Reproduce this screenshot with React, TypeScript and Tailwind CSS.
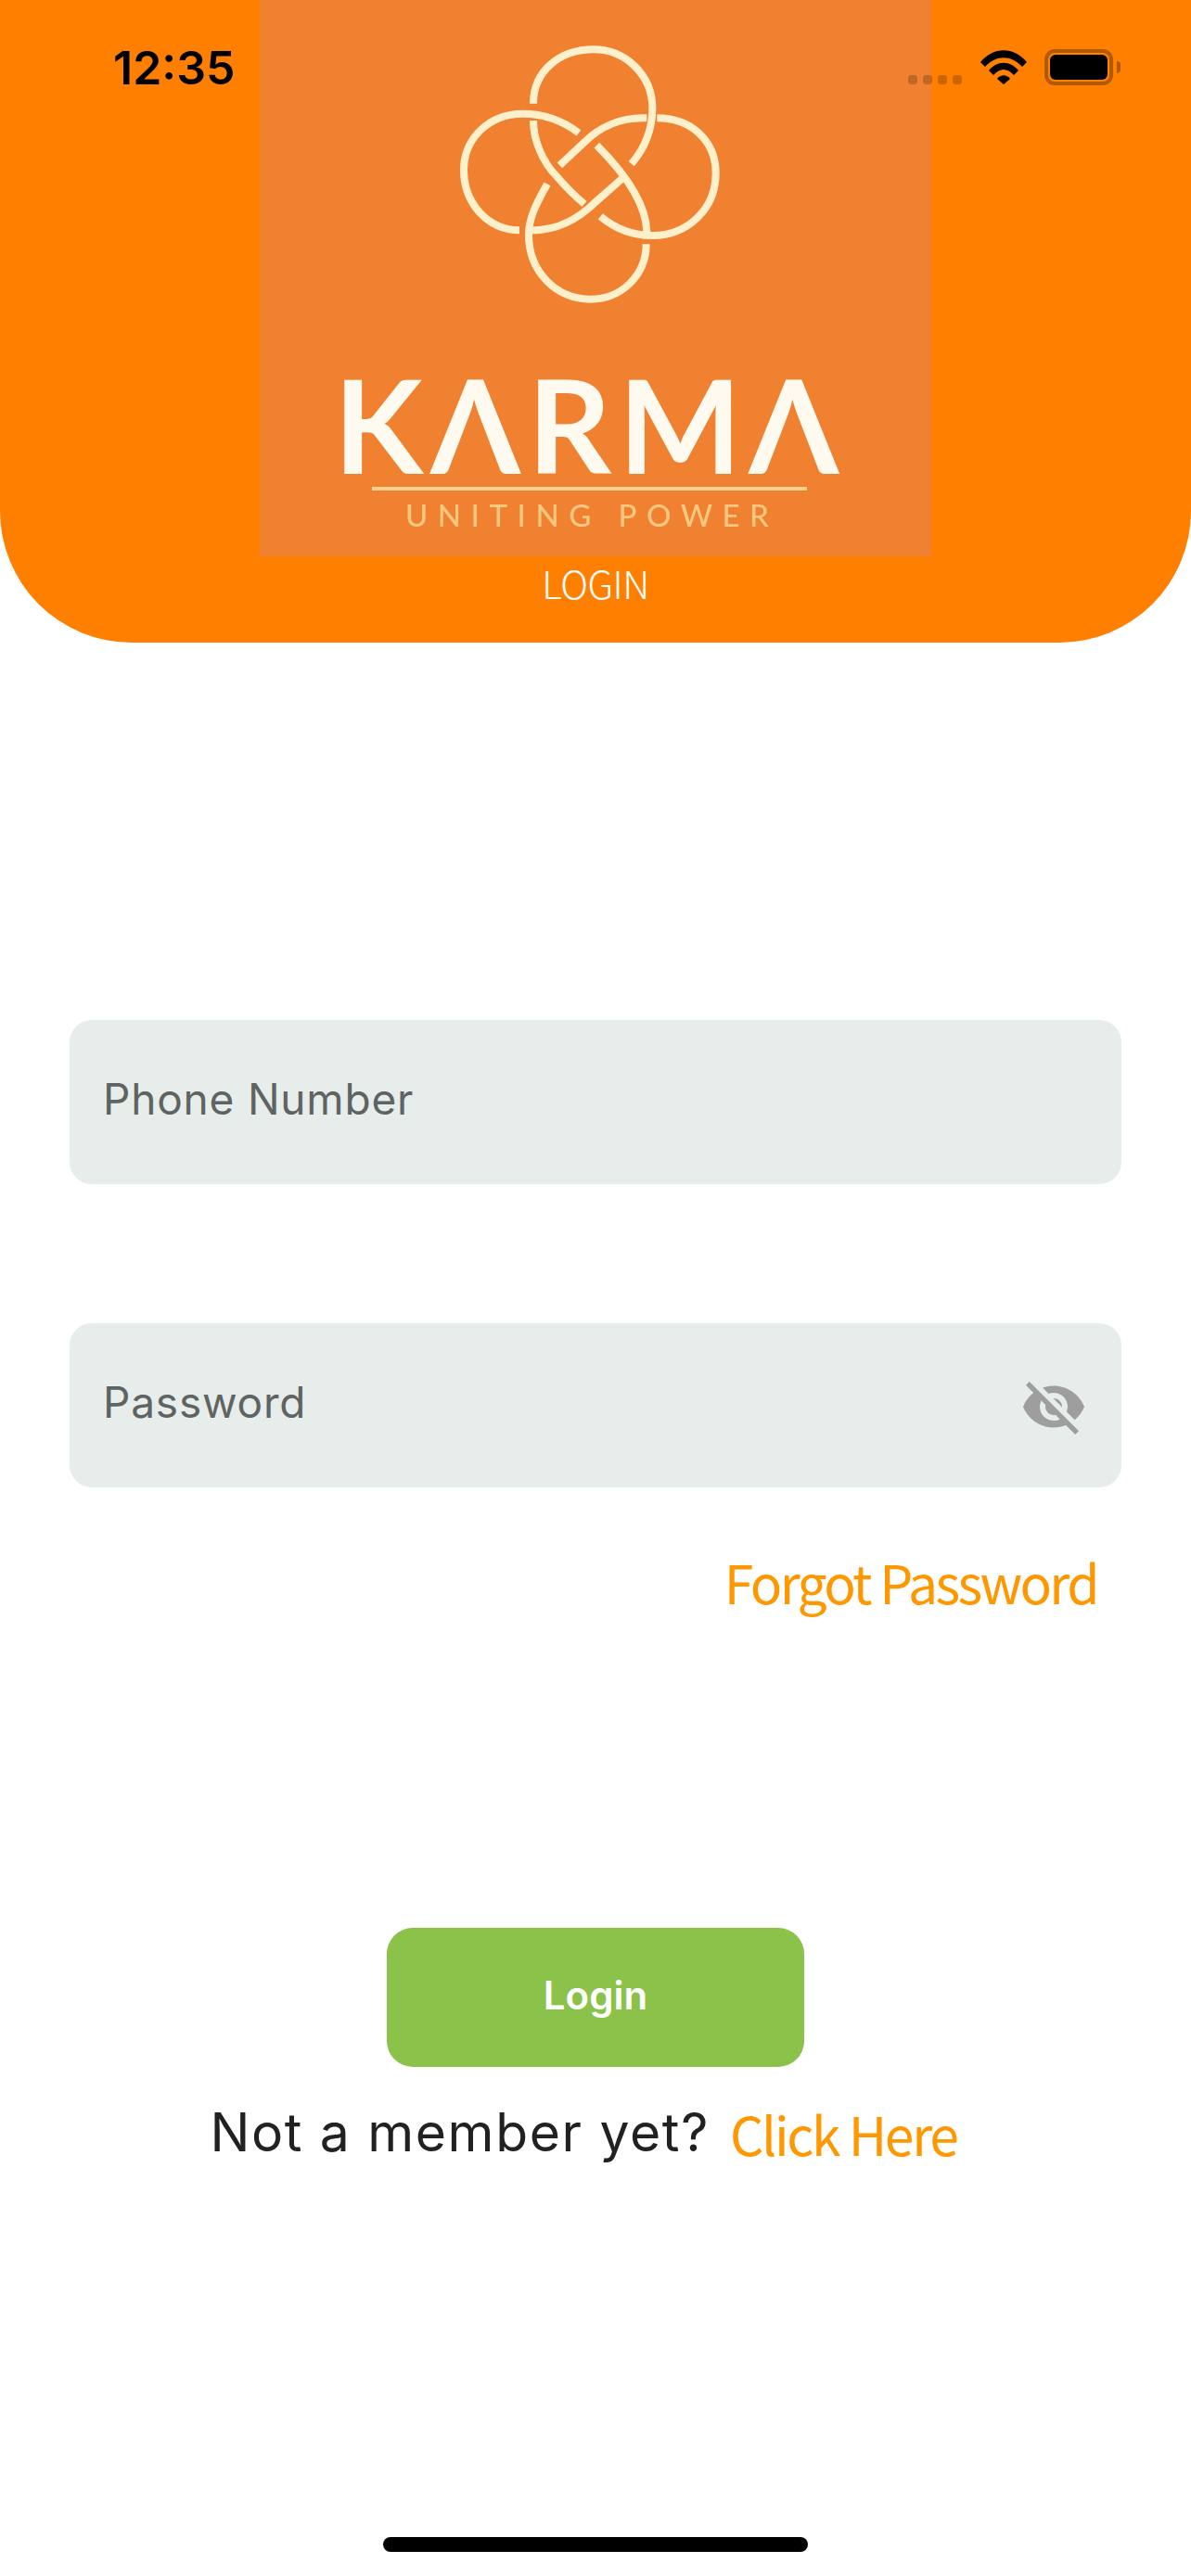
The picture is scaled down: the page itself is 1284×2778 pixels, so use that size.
import { MdVisibilityOff } from 'react-icons/md';

const knotPaths = [
  'M405 330C405 400 440 470 480 510C510 545 540 575 570 600',
  'M622 640C670 680 730 702 790 702C900 702 995 620 995 500C995 390 910 322 805 322',
  'M772 322C690 318 620 350 570 400L490 475',
  'M450 535C420 590 390 640 390 700C390 820 480 908 590 908C690 908 770 830 770 730',
  'M772 690C770 610 720 520 610 410',
  'M552 370C500 330 440 308 370 308C260 308 180 390 180 490C180 600 260 685 360 685',
  'M385 685C490 690 560 640 610 590L695 515',
  'M722 470C765 420 790 360 790 290C790 180 700 100 600 100C490 100 405 170 405 275',
];

const KarmaLogo = () => {
  return (
    <div className="flex h-[600px] w-[724px] flex-col bg-[#f08130]">
      <svg className="mt-[20px] ml-[160px] h-[320px] w-[360px] shrink-0 blur-[0.6px]" viewBox="0 0 1080 960" fill="none">
        {knotPaths.map((d) => (
          <path key={d} d={d} stroke="#fff0cc" strokeWidth="24" />
        ))}
      </svg>
      <div className="mt-[57px] ml-[80px] h-[120px] font-['Lato',sans-serif] text-[140px] leading-[120px] font-bold tracking-[8px] whitespace-nowrap text-[#fffaf0] blur-[0.5px]">
        KΛRMΛ
      </div>
      <div className="mt-[8px] ml-[121px] h-[4px] w-[469px] bg-[#fad08f]" />
      <div className="mt-[6px] ml-[157px] font-['Lato',sans-serif] text-[33px] leading-[40px] font-medium tracking-[10.5px] whitespace-nowrap text-[#f9c77f] blur-[0.5px]">
        UNITING POWER
      </div>
    </div>
  );
};

const StatusBar = () => {
  return (
    <div className="absolute top-0 left-0 flex h-[120px] w-full items-start">
      <span className="mt-[43px] ml-[122px] font-['Inter',sans-serif] text-[50px] leading-[60px] font-semibold text-black">
        12:35
      </span>
      <div className="mt-[81px] ml-auto flex gap-[6px]">
        <i className="h-[10px] w-[10px] rounded-[3px] bg-black/20" />
        <i className="h-[10px] w-[10px] rounded-[3px] bg-black/20" />
        <i className="h-[10px] w-[10px] rounded-[3px] bg-black/20" />
        <i className="h-[10px] w-[10px] rounded-[3px] bg-black/20" />
      </div>
      <svg className="mt-[54px] ml-[20px] h-[37px] w-[50px]" viewBox="0 0 50 37" fill="none">
        <path d="M0 13C14 -4 36 -4 50 13L45 18C33 5 17 5 5 18Z" fill="#000" />
        <path d="M9 22C18 11 32 11 41 22L36 27C29 19 21 19 14 27Z" fill="#000" />
        <path d="M18 31C22 26 28 26 32 31L25 37Z" fill="#000" />
      </svg>
      <div className="mt-[53px] ml-[19px] flex items-center">
        <div className="h-[39px] w-[74px] rounded-[11px] border-[4px] border-[#b35900] p-[2px]">
          <div className="h-full w-full rounded-[6px] bg-black" />
        </div>
        <div className="ml-[4px] h-[13px] w-[4px] rounded-r-[4px] bg-[#b35900]" />
      </div>
      <div className="w-[76px]" />
    </div>
  );
};

const Field = ({ label, secure }: { label: string; secure?: boolean }) => {
  return (
    <div className="flex h-[177px] w-[1134px] items-start rounded-[24px] bg-[#e7edeb] pl-[36px]">
      <span className="mt-[57px] font-['Inter',sans-serif] text-[46px] leading-[56px] tracking-[0.8px] text-[#5f6362]">
        {label}
      </span>
      {secure && <MdVisibilityOff className="mt-[54px] mr-[37px] ml-auto h-[72px] w-[72px] text-[#9e9e9e]" />}
    </div>
  );
};

export default function App() {
  return (
    <div className="relative flex h-[2778px] w-[1284px] flex-col items-center overflow-hidden bg-white">
      <header className="flex h-[693px] w-full shrink-0 flex-col items-center rounded-b-[142px] bg-[#ff7f00]">
        <KarmaLogo />
        <p className="mt-[2px] font-['Noto_Sans_CJK_SC',sans-serif] text-[41px] leading-[52px] font-light tracking-[-0.5px] text-white">
          LOGIN
        </p>
      </header>
      <StatusBar />

      <div className="mt-[407px]">
        <Field label="Phone Number" />
      </div>
      <div className="mt-[150px]">
        <Field label="Password" secure />
      </div>
      <div className="mt-[59px] flex w-[1134px] justify-end pr-[26px]">
        <a className="font-['Noto_Sans_CJK_SC',sans-serif] text-[57px] leading-[84px] font-normal tracking-[-2.6px] text-[#ff9800]">
          Forgot Password
        </a>
      </div>

      <button className="mt-[332px] h-[150px] w-[450px] rounded-[28px] bg-[#8bc34a] pb-[5px] font-['Inter',sans-serif] text-[42px] font-semibold text-white">
        Login
      </button>
      <div className="mt-[37px] flex w-full items-center justify-center pr-[26px]">
        <span className="font-['Inter',sans-serif] text-[57px] leading-[68px] tracking-[1.65px] text-[#212121]">
          Not a member yet?
        </span>
        <a className="ml-[22px] font-['Noto_Sans_CJK_SC',sans-serif] text-[57px] leading-[68px] font-normal tracking-[-2.3px] text-[#ff9800]">
          Click Here
        </a>
      </div>

      <div className="absolute bottom-[26px] left-[413px] h-[16px] w-[458px] rounded-full bg-black" />
    </div>
  );
}
